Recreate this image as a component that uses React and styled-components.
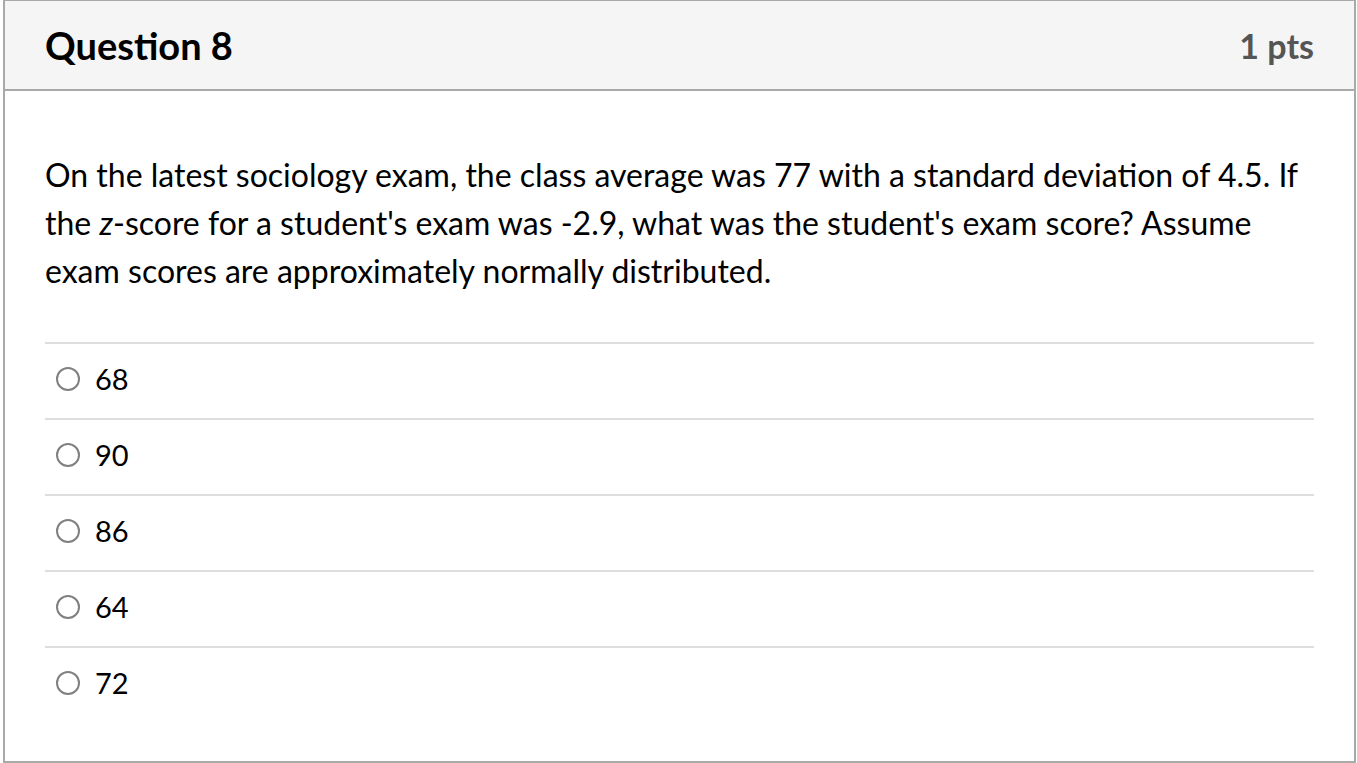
import React from "react";
import styled, { createGlobalStyle } from "styled-components";

const GlobalStyle = createGlobalStyle`
  html, body {
    margin: 0;
    padding: 0;
    background: #fff;
  }
  body {
    font-family: Lato, "Open Sans", sans-serif;
    color: #000;
  }
`;

const answers = ["68", "90", "86", "64", "72"];

function App() {
  return (
    <>
      <GlobalStyle />
      <Panel>
        <Header>
          <Title>Question 8</Title>
          <Points>1 pts</Points>
        </Header>
        <Body>
          <QuestionText>
            On the latest sociology exam, the class average was 77 with a
            standard deviation of 4.5. If the <em>z</em>-score for a student's
            exam was -2.9, what was the student's exam score? Assume exam
            scores are approximately normally distributed.
          </QuestionText>
          <AnswerList>
            {answers.map((a) => (
              <Answer key={a}>
                <Radio />
                <AnswerLabel>{a}</AnswerLabel>
              </Answer>
            ))}
          </AnswerList>
        </Body>
      </Panel>
    </>
  );
}

export default App;

const Panel = styled.div`
  box-sizing: border-box;
  width: 1353px;
  height: 764px;
  margin: -1px 0 0 3px;
  border: 2px solid #a9a9a9;
  display: flex;
  flex-direction: column;
`;

const Header = styled.div`
  box-sizing: border-box;
  height: 90px;
  padding: 0 40px;
  background: #f5f5f5;
  border-bottom: 2px solid #a9a9a9;
  display: flex;
  align-items: center;
  justify-content: space-between;
`;

const Title = styled.h2`
  margin: 0;
  font-size: 38px;
  font-weight: 700;
  color: #000;
`;

const Points = styled.div`
  font-size: 34px;
  font-weight: 700;
  color: #555;
`;

const Body = styled.div`
  padding: 0 40px;
`;

const QuestionText = styled.p`
  margin: 60px 0 47px;
  font-size: 32px;
  line-height: 48px;

  em {
    font-style: italic;
  }
`;

const AnswerList = styled.div`
  display: flex;
  flex-direction: column;
`;

const Answer = styled.label`
  box-sizing: border-box;
  height: 76px;
  padding: 0 0 5px 11px;
  border-top: 2px solid #dddddd;
  display: flex;
  align-items: center;
  gap: 15px;
`;

const Radio = styled.span`
  box-sizing: border-box;
  width: 24px;
  height: 24px;
  border: 2px solid #808080;
  border-radius: 50%;
  background: #fff;
`;

const AnswerLabel = styled.span`
  font-size: 29px;
  color: #000;
`;
